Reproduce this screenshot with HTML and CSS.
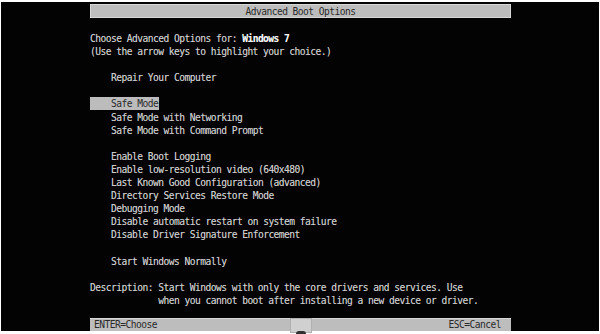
FILE: index.html
```html
<!DOCTYPE html>
<html>
<head>
<meta charset="utf-8">
<link rel="stylesheet" href="styles.css">
</head>
<body>
<div class="screen">
  <div class="panel">
    <div class="titlebar">Advanced Boot Options</div>
    <div class="lines">
      <div class="line">Choose Advanced Options for: <span class="hl">Windows 7</span></div>
      <div class="line">(Use the arrow keys to highlight your choice.)</div>
      <div class="line"></div>
      <div class="line ind">Repair Your Computer</div>
      <div class="line"></div>
      <div class="line"><span class="sel">    Safe Mode</span></div>
      <div class="line ind">Safe Mode with Networking</div>
      <div class="line ind">Safe Mode with Command Prompt</div>
      <div class="line"></div>
      <div class="line ind">Enable Boot Logging</div>
      <div class="line ind">Enable low-resolution video (640x480)</div>
      <div class="line ind">Last Known Good Configuration (advanced)</div>
      <div class="line ind">Directory Services Restore Mode</div>
      <div class="line ind">Debugging Mode</div>
      <div class="line ind">Disable automatic restart on system failure</div>
      <div class="line ind">Disable Driver Signature Enforcement</div>
      <div class="line"></div>
      <div class="line ind">Start Windows Normally</div>
      <div class="line"></div>
      <div class="line">Description: Start Windows with only the core drivers and services. Use</div>
      <div class="line">             when you cannot boot after installing a new device or driver.</div>
    </div>
    <div class="statusbar">
      <span>ENTER=Choose</span>
      <span>ESC=Cancel</span>
      <div class="cursor"><div class="cursor-foot"></div></div>
    </div>
  </div>
</div>
</body>
</html>
```

FILE: styles.css
```css
html, body {
  margin: 0;
  padding: 0;
  background: #ffffff;
}
body {
  width: 600px;
  height: 334px;
  overflow: hidden;
}
.screen {
  margin: 2px 1px 0 1px;
  width: 598px;
  height: 329px;
  background: #030303;
  display: flex;
  justify-content: flex-start;
}
.panel {
  margin-left: 89px;
  width: 421px;
  display: flex;
  flex-direction: column;
  font-family: "DejaVu Sans Mono", "Liberation Mono", monospace;
  font-size: 9.6px;
  letter-spacing: -0.53px;
  color: #cacaca;
  text-shadow: 0 0 0.6px rgba(200, 200, 200, 0.6);
}
.titlebar {
  margin-top: 2px;
  height: 14px;
  line-height: 14px;
  background: #bdbdbd;
  border: 1px solid #d8d8d8;
  box-sizing: border-box;
  color: #2a2a2a;
  text-shadow: none;
  text-align: center;
}
.lines {
  margin-top: 14px;
  display: flex;
  flex-direction: column;
}
.line {
  height: 13.1px;
  line-height: 13.1px;
  white-space: pre;
}
.ind {
  padding-left: 21px;
}
.hl {
  color: #f4f4f4;
  font-weight: bold;
}
.sel {
  background: #bcbcbc;
  color: #2a2a2a;
  text-shadow: none;
  display: inline-block;
  height: 13px;
  line-height: 13px;
  padding-right: 1px;
}
.statusbar {
  margin-top: auto;
  height: 12px;
  line-height: 12px;
  background: #bdbdbd;
  border-top: 1px solid #d8d8d8;
  color: #2a2a2a;
  text-shadow: none;
  display: flex;
  justify-content: space-between;
  padding: 0 10px 0 4px;
  position: relative;
}
.cursor {
  position: absolute;
  left: 200px;
  top: -1px;
  width: 22px;
  height: 15px;
  background: #d0d0d0;
  border: 1px solid #b0b0b0;
  box-sizing: border-box;
}
.cursor-foot {
  position: absolute;
  left: 5px;
  bottom: -2px;
  width: 10px;
  height: 3px;
  background: #303030;
  border-radius: 5px 5px 0 0;
}
```
